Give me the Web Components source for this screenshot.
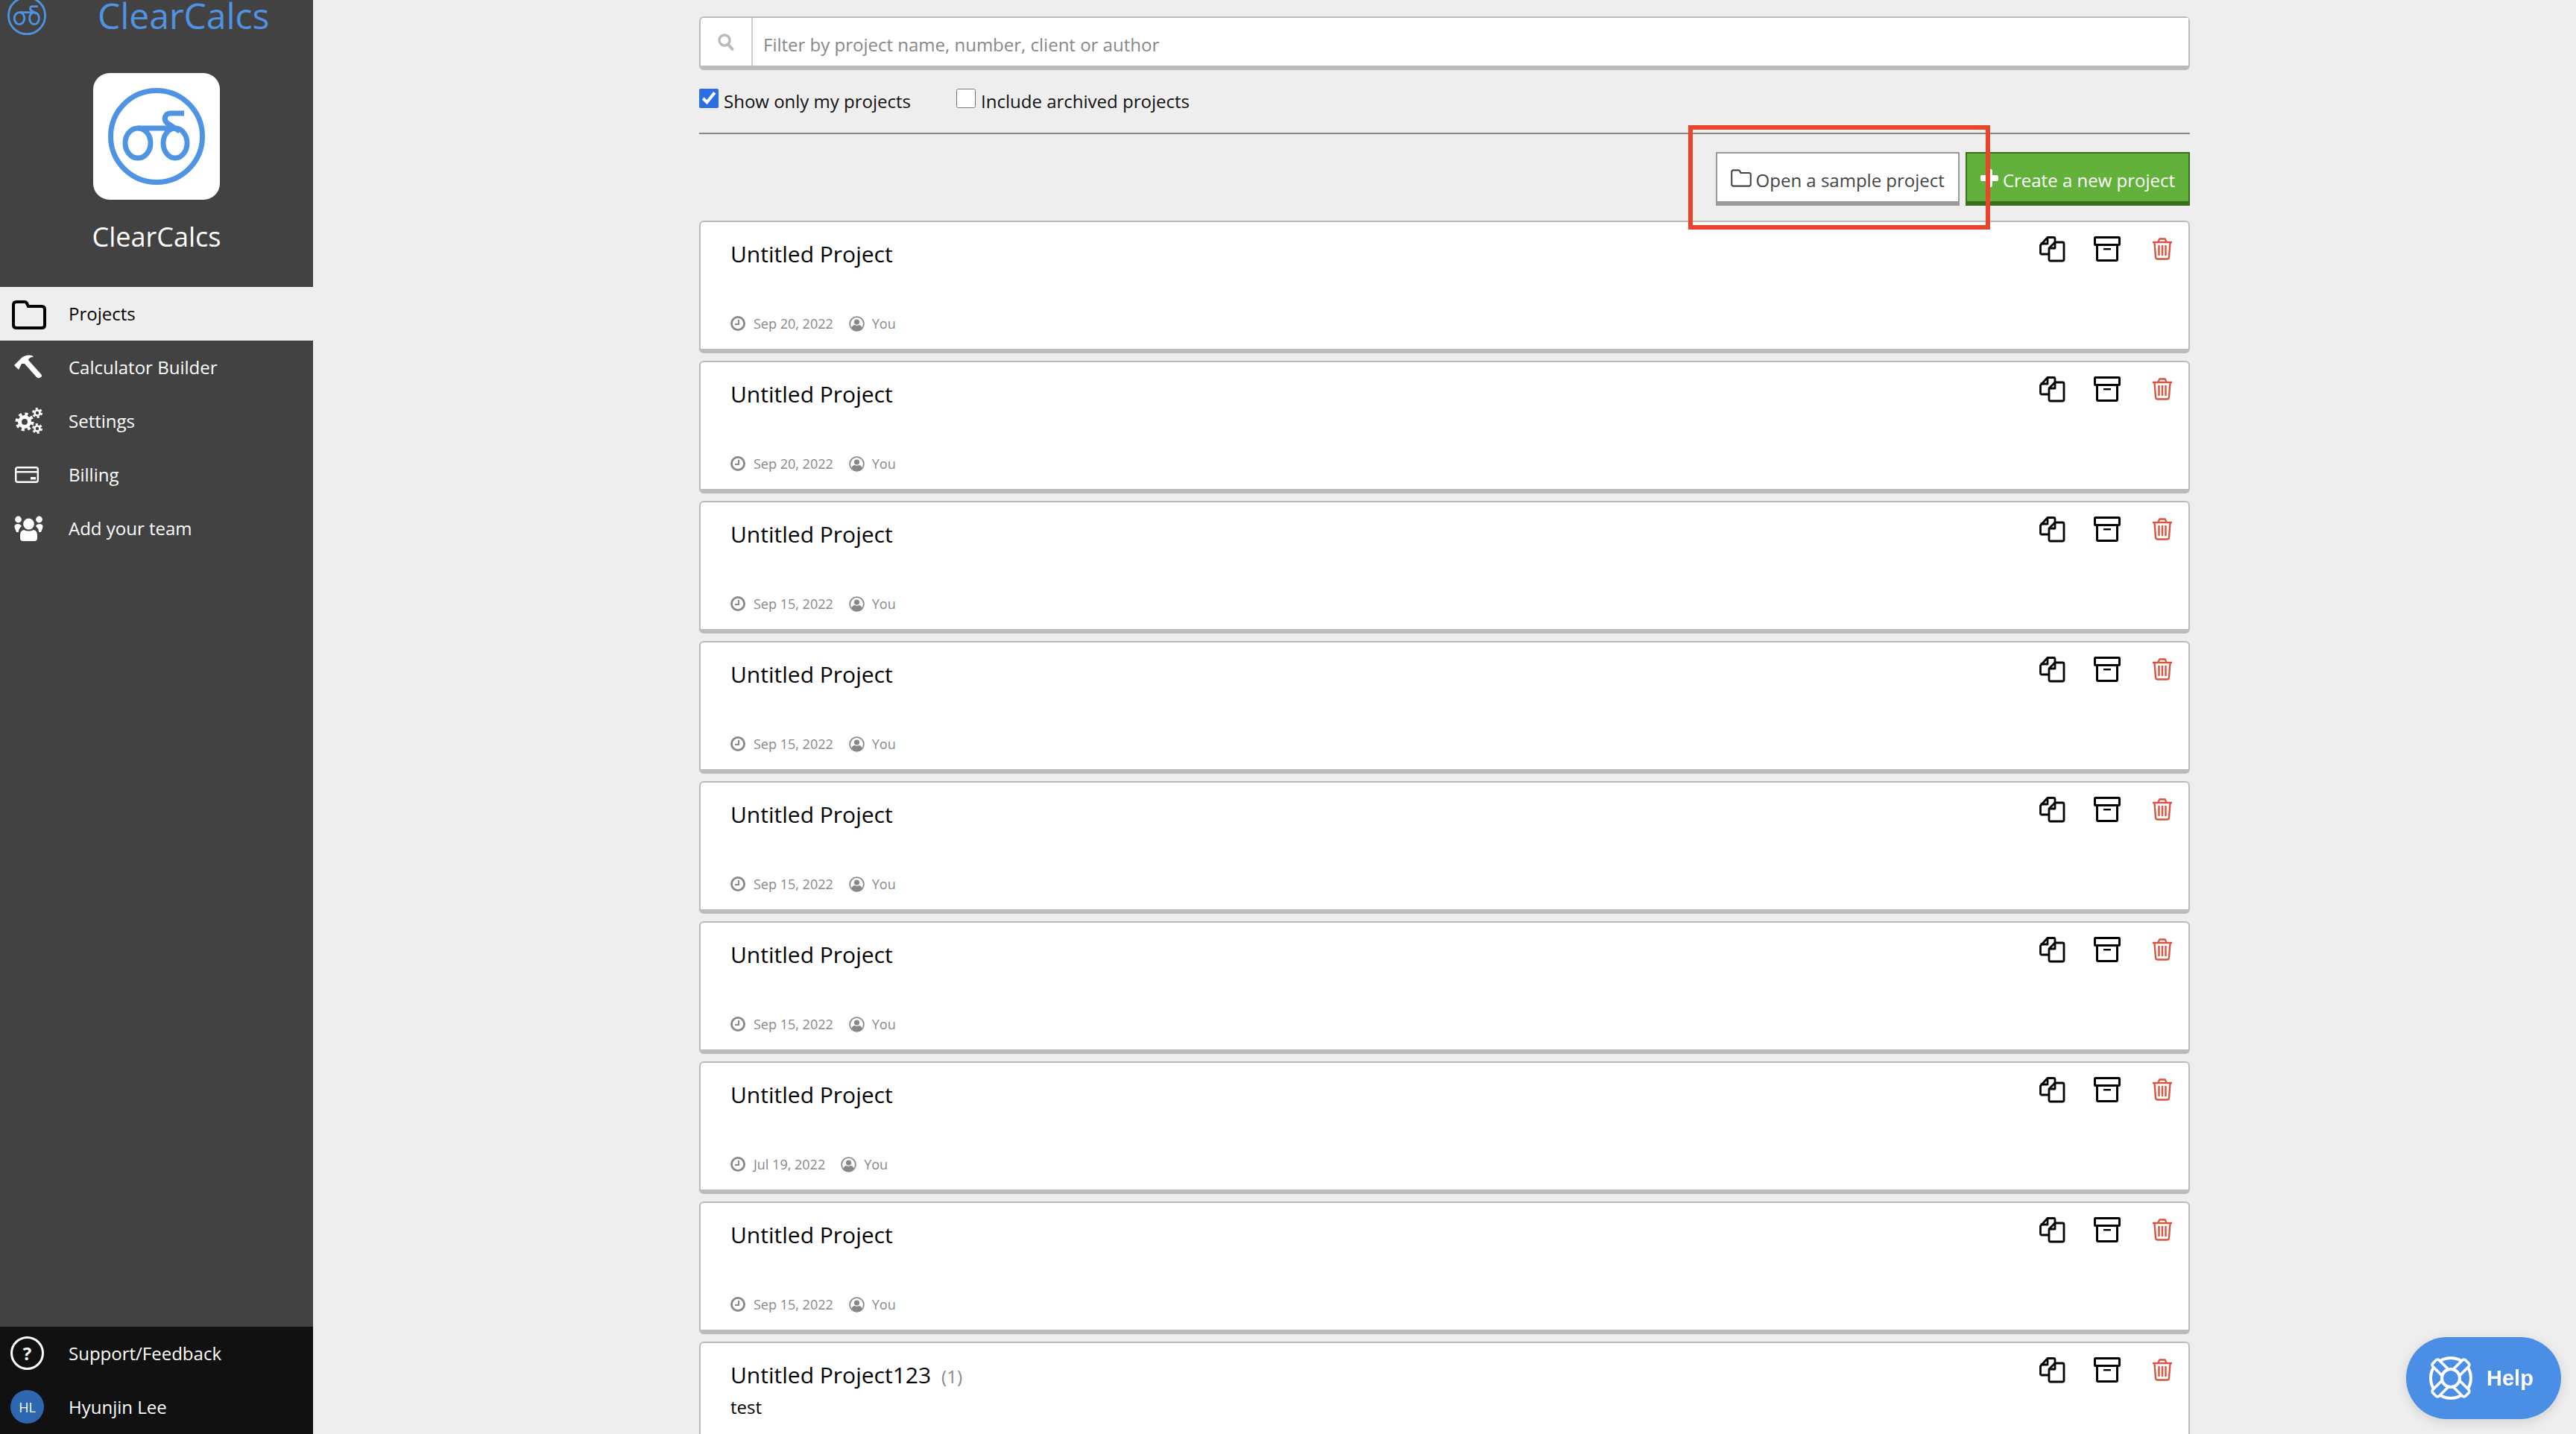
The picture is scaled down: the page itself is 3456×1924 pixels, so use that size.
<!DOCTYPE html>
<html lang="en">
<head>
<meta charset="utf-8">
<title>ClearCalcs - Projects</title>
<style>
  html, body { margin: 0; height: 100%; overflow: hidden; background: #eee; }
</style>
</head>
<body>
<cc-app></cc-app>

<script>
const FOLDER_PATH = 'M8 8H19Q21 8 22 10L24 14H42Q46 14 46 18V39Q46 43 42 43H8Q4 43 4 39V12Q4 8 8 8Z';

// Icon artwork, each one is the inner part of an svg
const ICONS = {
  logo: { box: '0 0 130 130', body: `
    <g fill="none" stroke="currentColor" stroke-width="7">
      <circle cx="65" cy="65" r="61.5"/>
      <ellipse cx="40" cy="74" rx="17" ry="20"/>
      <ellipse cx="90" cy="74" rx="16" ry="20"/>
      <path d="M40 54H90"/>
      <path d="M102 34H84C76 34 74 42 79 47L96 58"/>
    </g>` },
  folder: { box: '0 0 48 48', body: `
    <path fill="none" stroke="currentColor" stroke-width="4" d="${FOLDER_PATH}"/>` },
  folderSmall: { box: '2 6 46 39', body: `
    <path fill="none" stroke="currentColor" stroke-width="3.4" d="${FOLDER_PATH}"/>` },
  hammer: { box: '0 0 48 48', body: `
    <path fill="currentColor" d="M5 21L15 11Q21 6 29 8L31 10Q25 10 24 14L41 33Q43 35 41 37L39 38Q37 39 35 37L19 19L15 19L11 27Z"/>` },
  gears: { box: '0 0 48 48', body: `
    <g fill="none" stroke="currentColor">
      <circle cx="19" cy="25" r="6.5" stroke-width="5"/>
      <circle cx="19" cy="25" r="10.5" stroke-width="4" stroke-dasharray="4.1 4.15"/>
      <circle cx="36" cy="13" r="3.5" stroke-width="2.6"/>
      <circle cx="36" cy="13" r="5.5" stroke-width="3" stroke-dasharray="2.88 2.88"/>
      <circle cx="36" cy="34" r="3.5" stroke-width="2.6"/>
      <circle cx="36" cy="34" r="5.5" stroke-width="3" stroke-dasharray="2.88 2.88"/>
    </g>` },
  card: { box: '0 0 48 48', body: `
    <rect x="7.2" y="14.2" width="29.6" height="19.6" rx="2.5" fill="none" stroke="currentColor" stroke-width="2.4"/>
    <rect x="7" y="19" width="30" height="2.4" fill="currentColor"/>
    <rect x="27" y="27" width="7" height="3.4" fill="currentColor"/>` },
  users: { box: '0 0 48 48', body: `
    <g fill="currentColor">
      <circle cx="10.5" cy="12" r="4.4"/>
      <circle cx="38.5" cy="12" r="4.4"/>
      <path d="M6 24Q4 19 9 18Q14 18 15 21Q11 24 11 29L8 29Z"/>
      <path d="M43 24Q45 19 40 18Q35 18 34 21Q38 24 38 29L41 29Z"/>
      <circle cx="24.5" cy="18" r="7.4"/>
      <path d="M13 33Q13 27 18 26Q24.5 29 31 26Q36 27 36 33V37Q36 41 32 41H17Q13 41 13 37Z"/>
    </g>` },
  search: { box: '0 0 22 22', body: `
    <circle cx="9" cy="9" r="7" fill="none" stroke="currentColor" stroke-width="3.4"/>
    <path d="M13.5 14L19.5 21" stroke="currentColor" stroke-width="4" stroke-linecap="round"/>` },
  clock: { box: '0 0 20 20', body: `
    <circle cx="10" cy="10" r="8.6" fill="none" stroke="currentColor" stroke-width="2.8"/>
    <path d="M11 5V11H6" fill="none" stroke="currentColor" stroke-width="2"/>` },
  person: { box: '0 0 21 21', body: `
    <circle cx="10.5" cy="10.5" r="9.4" fill="none" stroke="currentColor" stroke-width="1.8"/>
    <circle cx="10.5" cy="8" r="3.6" fill="currentColor"/>
    <path d="M3.5 16Q4 12.5 7.5 12Q10.5 13.5 13.5 12Q17 12.5 17.5 16Q14.5 20 10.5 20Q6.5 20 3.5 16Z" fill="currentColor"/>` },
  copy: { box: '0 0 34 34', body: `
    <g fill="none" stroke="currentColor" stroke-width="2.8" stroke-linejoin="round">
      <path d="M13 24H3.5Q1.5 24 1.5 22V12L11 1.5H19Q21 1.5 21 3.5V8"/>
      <path d="M11 1.5V10H1.5"/>
      <path d="M21 8H31Q33 8 33 10V31Q33 33 31 33H15Q13 33 13 31V16Z"/>
      <path d="M21 8V16H13"/>
    </g>` },
  archive: { box: '0 0 36 34', body: `
    <g fill="none" stroke="currentColor" stroke-width="3">
      <rect x="1.5" y="1.5" width="33" height="10" rx="1"/>
      <path d="M4.5 11.5V31Q4.5 32.5 6 32.5H30Q31.5 32.5 31.5 31V11.5"/>
    </g>
    <rect x="13" y="16" width="10" height="2.4" fill="currentColor"/>` },
  trash: { box: '0 0 28 30', body: `
    <g fill="none" stroke="currentColor" stroke-width="2.4">
      <path d="M1 6H27"/>
      <path d="M8.5 5L10.5 1.5H17.5L19.5 5"/>
      <path d="M3.5 6L5 26Q5.2 28.5 8 28.5H20Q22.8 28.5 23 26L24.5 6"/>
      <path d="M9.5 10V24M14 10V24M18.5 10V24"/>
    </g>` },
  buoy: { box: '0 0 60 60', body: `
    <g fill="none" stroke="currentColor" stroke-width="4">
      <circle cx="30" cy="30" r="27"/>
      <g fill="#4a8fe5" stroke-width="3.6" stroke-linejoin="round">
        <rect x="24" y="-1" width="12" height="22" rx="3" transform="rotate(45 30 30)"/>
        <rect x="24" y="-1" width="12" height="22" rx="3" transform="rotate(135 30 30)"/>
        <rect x="24" y="-1" width="12" height="22" rx="3" transform="rotate(225 30 30)"/>
        <rect x="24" y="-1" width="12" height="22" rx="3" transform="rotate(315 30 30)"/>
      </g>
      <circle cx="30" cy="30" r="12" fill="#4a8fe5"/>
    </g>` }
};

class CcIcon extends HTMLElement {
  connectedCallback() {
    const icon = ICONS[this.getAttribute('name')];
    this.attachShadow({ mode: 'open' });
    // language=HTML
    this.shadowRoot.innerHTML = `
      <style>
        :host { display: inline-flex; flex: none; }
        svg { display: block; width: 100%; height: 100%; overflow: visible; }
      </style>
      <svg viewBox="${icon.box}" xmlns="http://www.w3.org/2000/svg">${icon.body}</svg>
    `;
  }
}

class CcNavItem extends HTMLElement {
  constructor() {
    super();
    this.attachShadow({ mode: 'open' });
    // language=HTML
    this.shadowRoot.innerHTML = `
      <style>
        :host {
          align-items: center;
          color: #fff;
          display: flex;
          font: 24px/36px "Open Sans", sans-serif;
          gap: 30px;
          height: 72px;
          padding-left: 14px;
        }
        :host([active]) {
          background: #eee;
          color: #000;
        }
        #icon {
          display: flex;
          height: 48px;
          width: 48px;
        }
        ::slotted(cc-icon) {
          height: 48px;
          width: 48px;
        }
      </style>
      <span id="icon"><slot name="icon"></slot></span>
      <slot></slot>
    `;
  }
}

class CcRoundBadge extends HTMLElement {
  constructor() {
    super();
    this.attachShadow({ mode: 'open' });
    // language=HTML
    this.shadowRoot.innerHTML = `
      <style>
        :host {
          align-items: center;
          border-radius: 50%;
          box-sizing: border-box;
          display: flex;
          font: 18px/1 "Open Sans", sans-serif;
          height: 45px;
          justify-content: center;
          margin-top: 1px;
          width: 45px;
        }
        :host([outline]) {
          border: 3px solid #fff;
          font-size: 24px;
          font-weight: 700;
        }
        :host([fill]) { background: #2f66b0; }
      </style>
      <slot></slot>
    `;
  }
}

class CcSidebar extends HTMLElement {
  constructor() {
    super();
    this.attachShadow({ mode: 'open' });
    // language=HTML
    this.shadowRoot.innerHTML = `
      <style>
        :host {
          background: #424242;
          display: flex;
          flex: none;
          flex-direction: column;
          font-family: "Open Sans", sans-serif;
          height: 100%;
          width: 420px;
        }
        header {
          align-items: center;
          display: flex;
          flex: none;
          flex-direction: column;
          height: 385px;
        }
        #brand {
          align-items: center;
          align-self: stretch;
          color: #4f94e4;
          display: flex;
          font-size: 48px;
          gap: 69px;
          line-height: 60px;
          margin-top: -9px;
          padding-left: 10px;
        }
        #brand cc-icon {
          height: 52px;
          width: 52px;
        }
        #tile {
          background: #fff;
          border-radius: 22px;
          box-sizing: border-box;
          color: #4f94e4;
          display: flex;
          height: 170px;
          margin-top: 47px;
          padding: 20px;
          width: 170px;
        }
        #tile cc-icon {
          height: 130px;
          width: 130px;
        }
        #name {
          color: #fff;
          font-size: 36px;
          line-height: 48px;
          margin-top: 26px;
        }
        nav { flex: 1; }
        footer {
          background: #111;
          flex: none;
          height: 144px;
        }
      </style>
      <header>
        <div id="brand"><cc-icon name="logo"></cc-icon><span>ClearCalcs</span></div>
        <div id="tile"><cc-icon name="logo"></cc-icon></div>
        <div id="name">ClearCalcs</div>
      </header>
      <nav>
        <cc-nav-item active><cc-icon slot="icon" name="folder"></cc-icon>Projects</cc-nav-item>
        <cc-nav-item><cc-icon slot="icon" name="hammer"></cc-icon>Calculator Builder</cc-nav-item>
        <cc-nav-item><cc-icon slot="icon" name="gears"></cc-icon>Settings</cc-nav-item>
        <cc-nav-item><cc-icon slot="icon" name="card"></cc-icon>Billing</cc-nav-item>
        <cc-nav-item><cc-icon slot="icon" name="users"></cc-icon>Add your team</cc-nav-item>
      </nav>
      <footer>
        <cc-nav-item><cc-round-badge slot="icon" outline>?</cc-round-badge>Support/Feedback</cc-nav-item>
        <cc-nav-item><cc-round-badge slot="icon" fill>HL</cc-round-badge>Hyunjin Lee</cc-nav-item>
      </footer>
    `;
  }
}

class CcSearch extends HTMLElement {
  constructor() {
    super();
    this.attachShadow({ mode: 'open' });
    // language=HTML
    this.shadowRoot.innerHTML = `
      <style>
        :host {
          background: #fff;
          border: 2px solid #bbb;
          border-bottom-width: 6px;
          border-radius: 6px;
          box-sizing: border-box;
          display: flex;
          height: 72px;
        }
        #addon {
          align-items: center;
          border-right: 2px solid #ccc;
          color: #bbb;
          display: flex;
          justify-content: center;
          width: 68px;
        }
        #addon cc-icon {
          height: 22px;
          width: 22px;
        }
        input {
          border: 0;
          color: #000;
          flex: 1;
          font: 24px "Open Sans", sans-serif;
          outline: 0;
          padding: 6px 0 0 14px;
        }
        input::placeholder { color: #888; opacity: 1; }
      </style>
      <div id="addon"><cc-icon name="search"></cc-icon></div>
      <input type="text" placeholder="Filter by project name, number, client or author">
    `;
  }
}

class CcCheck extends HTMLElement {
  constructor() {
    super();
    this.attachShadow({ mode: 'open' });
    // language=HTML
    this.shadowRoot.innerHTML = `
      <style>
        :host {
          color: #111;
          display: inline-flex;
          font: 24px/34px "Open Sans", sans-serif;
          gap: 7px;
        }
        input {
          accent-color: #2c6fe0;
          height: 26px;
          margin: 0;
          width: 26px;
        }
      </style>
      <input type="checkbox">
      <span><slot></slot></span>
    `;
  }

  connectedCallback() {
    this.shadowRoot.querySelector('input').checked = this.hasAttribute('checked');
  }
}

class CcButton extends HTMLElement {
  constructor() {
    super();
    this.attachShadow({ mode: 'open' });
    // language=HTML
    this.shadowRoot.innerHTML = `
      <style>
        :host {
          align-items: center;
          background: #fff;
          border: 2px solid #999;
          border-bottom-width: 6px;
          box-sizing: border-box;
          color: #444;
          display: inline-flex;
          font: 24px/36px "Open Sans", sans-serif;
          gap: 6px;
          height: 72px;
          padding: 8px 18px 0;
        }
        :host([primary]) {
          background: #62b13b;
          border-color: #3c6e21;
          color: #fff;
        }
        ::slotted(cc-icon) {
          height: 24px;
          margin-top: -6px;
          width: 28px;
        }
      </style>
      <slot name="icon"></slot>
      <slot></slot>
    `;
  }
}

class CcPlus extends HTMLElement {
  constructor() {
    super();
    this.attachShadow({ mode: 'open' });
    // language=HTML
    this.shadowRoot.innerHTML = `
      <style>
        :host {
          display: block;
          flex: none;
          height: 24px;
          margin-top: -6px;
          width: 24px;
        }
        i {
          background: #fff;
          border-radius: 2px;
          display: block;
          height: 8px;
          margin-top: 8px;
          width: 24px;
        }
        i + i {
          height: 24px;
          margin: -16px 0 0 8px;
          width: 8px;
        }
      </style>
      <i></i><i></i>
    `;
  }
}

class CcProjectCard extends HTMLElement {
  constructor() {
    super();
    this.attachShadow({ mode: 'open' });
    // language=HTML
    this.shadowRoot.innerHTML = `
      <style>
        :host {
          background: #fff;
          border: 2px solid #bbb;
          border-bottom-width: 6px;
          border-radius: 6px;
          box-sizing: border-box;
          display: flex;
          flex: none;
          font-family: "Open Sans", sans-serif;
          height: 178px;
        }
        #info {
          display: flex;
          flex: 1;
          flex-direction: column;
          padding: 23px 0 22px 40px;
        }
        #title {
          color: #000;
          font-size: 30px;
          line-height: 40px;
        }
        #count {
          color: #888;
          font-size: 24px;
          margin-left: 14px;
        }
        #description {
          color: #000;
          font-size: 24px;
          line-height: 36px;
          margin-top: 3px;
        }
        #meta {
          align-items: center;
          color: #888;
          display: flex;
          font-size: 18px;
          line-height: 24px;
          margin-top: auto;
        }
        #meta cc-icon[name=clock] {
          height: 20px;
          margin-right: 11px;
          width: 20px;
        }
        #meta cc-icon[name=person] {
          height: 21px;
          margin: 0 10px 0 21px;
          width: 21px;
        }
        #actions {
          align-items: center;
          align-self: flex-start;
          display: flex;
          padding: 19px 21px 0 0;
        }
        #actions cc-icon[name=copy] { height: 34px; width: 34px; }
        #actions cc-icon[name=archive] { height: 34px; margin-left: 39px; width: 36px; }
        #actions cc-icon[name=trash] { color: #d9533f; height: 30px; margin-left: 42px; width: 28px; }
      </style>
      <div id="info">
        <div id="title"><slot name="title"></slot><span id="count"><slot name="count"></slot></span></div>
        <div id="description"><slot name="description"></slot></div>
        <div id="meta">
          <cc-icon name="clock"></cc-icon><slot name="date"></slot>
          <cc-icon name="person"></cc-icon>You
        </div>
      </div>
      <div id="actions">
        <cc-icon name="copy"></cc-icon>
        <cc-icon name="archive"></cc-icon>
        <cc-icon name="trash"></cc-icon>
      </div>
    `;
  }
}

class CcHelp extends HTMLElement {
  constructor() {
    super();
    this.attachShadow({ mode: 'open' });
    // language=HTML
    this.shadowRoot.innerHTML = `
      <style>
        :host {
          align-items: center;
          background: #4a8fe5;
          border-radius: 55px;
          bottom: 20px;
          box-shadow: 0 4px 16px rgba(0, 0, 0, 0.12);
          box-sizing: border-box;
          color: #fff;
          display: flex;
          font: 700 29px/1 "Liberation Sans", sans-serif;
          gap: 18px;
          height: 110px;
          padding-left: 30px;
          position: fixed;
          right: 20px;
          width: 208px;
        }
        cc-icon {
          height: 60px;
          width: 60px;
        }
      </style>
      <cc-icon name="buoy"></cc-icon>
      <slot></slot>
    `;
  }
}

class CcApp extends HTMLElement {
  constructor() {
    super();
    this.attachShadow({ mode: 'open' });
    const dates = ['Sep 20, 2022', 'Sep 20, 2022', 'Sep 15, 2022', 'Sep 15, 2022',
      'Sep 15, 2022', 'Sep 15, 2022', 'Jul 19, 2022', 'Sep 15, 2022'];
    const cards = dates.map(date => `
      <cc-project-card>
        <span slot="title">Untitled Project</span>
        <span slot="date">${date}</span>
      </cc-project-card>`).join('');
    // language=HTML
    this.shadowRoot.innerHTML = `
      <style>
        :host {
          background: #eee;
          display: flex;
          height: 100vh;
          overflow: hidden;
        }
        main {
          flex: 1;
          overflow: hidden;
        }
        #column {
          display: flex;
          flex-direction: column;
          margin: 0 auto;
          padding-top: 22px;
          width: 2000px;
        }
        #filters {
          display: flex;
          gap: 61px;
          height: 59px;
          margin-top: 25px;
        }
        hr {
          background: #888;
          border: 0;
          height: 2px;
          margin: 0;
        }
        #toolbar {
          display: flex;
          gap: 8px;
          justify-content: flex-end;
          margin: 24px 0 20px;
          position: relative;
        }
        #highlight {
          border: 6px solid #e8452a;
          box-sizing: border-box;
          height: 140px;
          left: 1327px;
          pointer-events: none;
          position: absolute;
          top: -36px;
          width: 405px;
          z-index: 1;
        }
        #cards {
          display: flex;
          flex-direction: column;
          gap: 10px;
        }
      </style>
      <cc-sidebar></cc-sidebar>
      <main>
        <div id="column">
          <cc-search></cc-search>
          <div id="filters">
            <cc-check checked>Show only my projects</cc-check>
            <cc-check>Include archived projects</cc-check>
          </div>
          <hr>
          <div id="toolbar">
            <cc-button><cc-icon slot="icon" name="folderSmall"></cc-icon>Open a sample project</cc-button>
            <cc-button primary><cc-plus slot="icon"></cc-plus>Create a new project</cc-button>
            <div id="highlight"></div>
          </div>
          <div id="cards">
            ${cards}
            <cc-project-card>
              <span slot="title">Untitled Project123</span>
              <span slot="count">(1)</span>
              <span slot="description">test</span>
              <span slot="date">Sep 15, 2022</span>
            </cc-project-card>
          </div>
        </div>
      </main>
      <cc-help>Help</cc-help>
    `;
  }
}

customElements.define('cc-icon', CcIcon);
customElements.define('cc-nav-item', CcNavItem);
customElements.define('cc-round-badge', CcRoundBadge);
customElements.define('cc-sidebar', CcSidebar);
customElements.define('cc-search', CcSearch);
customElements.define('cc-check', CcCheck);
customElements.define('cc-button', CcButton);
customElements.define('cc-plus', CcPlus);
customElements.define('cc-project-card', CcProjectCard);
customElements.define('cc-help', CcHelp);
customElements.define('cc-app', CcApp);
</script>
</body>
</html>
